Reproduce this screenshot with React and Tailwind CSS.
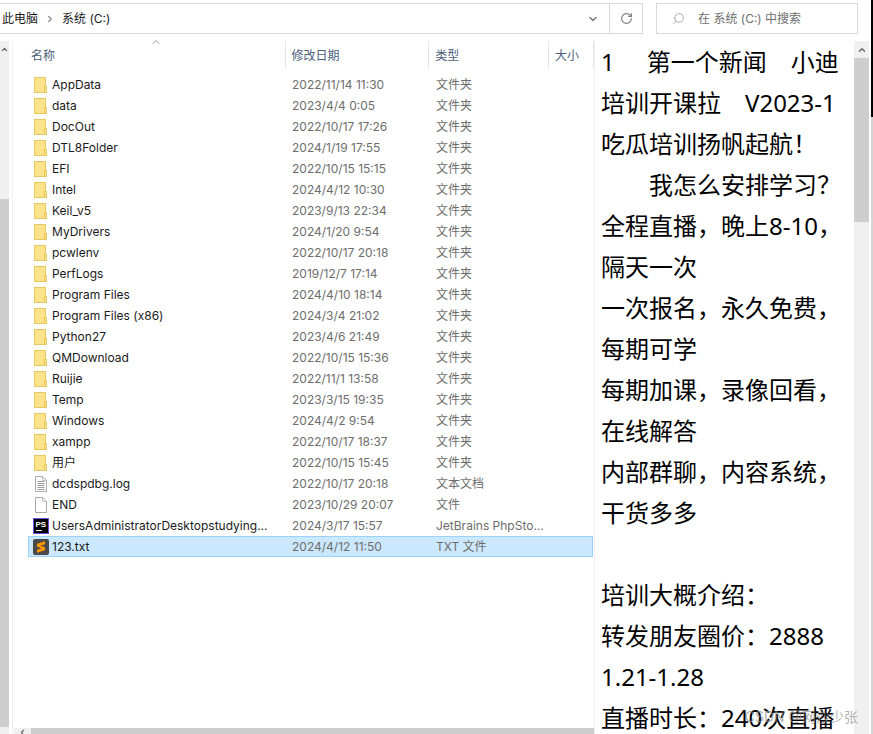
import { ChevronUp, ChevronDown, ChevronLeft, ChevronRight, RotateCw, Search } from 'lucide-react';

const files = [
  ['AppData', '2022/11/14 11:30', '文件夹'],
  ['data', '2023/4/4 0:05', '文件夹'],
  ['DocOut', '2022/10/17 17:26', '文件夹'],
  ['DTL8Folder', '2024/1/19 17:55', '文件夹'],
  ['EFI', '2022/10/15 15:15', '文件夹'],
  ['Intel', '2024/4/12 10:30', '文件夹'],
  ['Keil_v5', '2023/9/13 22:34', '文件夹'],
  ['MyDrivers', '2024/1/20 9:54', '文件夹'],
  ['pcwlenv', '2022/10/17 20:18', '文件夹'],
  ['PerfLogs', '2019/12/7 17:14', '文件夹'],
  ['Program Files', '2024/4/10 18:14', '文件夹'],
  ['Program Files (x86)', '2024/3/4 21:02', '文件夹'],
  ['Python27', '2023/4/6 21:49', '文件夹'],
  ['QMDownload', '2022/10/15 15:36', '文件夹'],
  ['Ruijie', '2022/11/1 13:58', '文件夹'],
  ['Temp', '2023/3/15 19:35', '文件夹'],
  ['Windows', '2024/4/2 9:54', '文件夹'],
  ['xampp', '2022/10/17 18:37', '文件夹'],
  ['用户', '2022/10/15 15:45', '文件夹'],
  ['dcdspdbg.log', '2022/10/17 20:18', '文本文档', 'log'],
  ['END', '2023/10/29 20:07', '文件', 'blank'],
  ['UsersAdministratorDesktopstudying...', '2024/3/17 15:57', 'JetBrains PhpSto...', 'ps'],
  ['123.txt', '2024/4/12 11:50', 'TXT 文件', 'sublime', true],
];

const lines = [
  '1\u3000\u2009\u2009第一个新闻\u3000小迪',
  '培训开课拉\u3000V2023-1',
  '吃瓜培训扬帆起航！',
  '\u3000\u3000我怎么安排学习？',
  '全程直播，晚上8-10，',
  '隔天一次',
  '一次报名，永久免费，',
  '每期可学',
  '每期加课，录像回看，',
  '在线解答',
  '内部群聊，内容系统，',
  '干货多多',
  '\u00a0',
  '培训大概介绍：',
  '转发朋友圈价：2888',
  '1.21-1.28',
  '直播时长：240次直播',
];

const FileIcon = ({ kind }) => {
  if (kind === 'log' || kind === 'blank') {
    return (
      <svg width="14" height="16" viewBox="0 0 14 16" fill="none">
        <path d="M1.5.5h7l4 4v11h-11z" fill="#fff" stroke="#a9a9a9" />
        <path d="M8.5.5v4h4" stroke="#c4c4c4" />
        {kind === 'log' && (
          <path d="M3.5 5.5h7M3.5 7.5h7M3.5 9.5h7M3.5 11.5h7M3.5 13.5h7" stroke="#9a9a9a" />
        )}
      </svg>
    );
  }
  if (kind === 'ps') {
    return (
      <svg width="16" height="16" viewBox="0 0 16 16">
        <rect x="0.5" y="0.5" width="15" height="15" fill="#000" stroke="#6a4fe0" />
        <rect x="3" y="12" width="6" height="1" fill="#fff" />
        <text x="2.5" y="9" fontSize="8" fontWeight="700" fill="#fff" fontFamily="'Liberation Sans', sans-serif">PS</text>
      </svg>
    );
  }
  if (kind === 'sublime') {
    return (
      <svg width="16" height="16" viewBox="0 0 16 16">
        <rect width="16" height="16" rx="2" fill="#4a4a4a" />
        <path d="M4 6 12 3.5v3L7.5 8 12 9.5v3L4 15v-3l4.5-1.5L4 9z" fill="#ff9800" transform="translate(0 -1.2)" />
      </svg>
    );
  }
  return (
    <svg width="14" height="16" viewBox="0 0 14 16">
      <rect x="0.5" y="0.5" width="11" height="15" fill="#ffe38a" stroke="#e8c860" />
      <rect x="10.5" y="9.5" width="2" height="6" fill="#ffe38a" stroke="#e8c860" />
    </svg>
  );
};

const HeaderCell = ({ className, children }) => (
  <div className={`flex h-[27px] items-center border-r border-[#e5e5e5] pl-[6px] pt-[2px] text-[#4c607a] ${className}`}>
    {children}
  </div>
);

const Row = ({ file }) => {
  const [name, date, type, kind, selected] = file;
  return (
    <div className={`flex h-[21px] items-center border ${selected ? 'border-[#99d1ff] bg-[#cce8ff]' : 'border-transparent'}`}>
      <div className="flex w-[21px] shrink-0 justify-center pl-[2px]">
        <FileIcon kind={kind} />
      </div>
      <div className="ml-[2px] w-[240px] shrink-0 whitespace-nowrap text-[#1a1a1a]">{name}</div>
      <div className="w-[144px] shrink-0 text-[#6d6d6d]">{date}</div>
      <div className="whitespace-nowrap text-[#6d6d6d]">{type}</div>
    </div>
  );
};

export default function App() {
  return (
    <div
      className="relative flex h-[734px] w-[873px] flex-col overflow-hidden bg-white text-[12px]"
      style={{ fontFamily: "Inter, 'Noto Sans CJK SC', sans-serif" }}
    >
      {/* address bar */}
      <div className="flex h-[41px] shrink-0 pt-[3px]">
        <div className="flex h-[31px] w-[610px] items-center border-y border-r border-[#d9d9d9] text-[#1a1a1a]">
          <span className="ml-[2px]">此电脑</span>
          <ChevronRight size={10} strokeWidth={3} className="mx-[7px] text-[#8a8a8a]" />
          <span>系统 (C:)</span>
          <ChevronDown size={12} strokeWidth={3} className="ml-auto mr-[10px] text-[#7a7a7a]" />
        </div>
        <div className="flex h-[31px] w-[33px] items-center justify-center border-y border-r border-[#d9d9d9]">
          <RotateCw size={13} strokeWidth={2} className="text-[#7a7a7a]" />
        </div>
        <div className="ml-[13px] flex h-[31px] w-[202px] items-center border border-[#d9d9d9] text-[#6d6d6d]">
          <Search size={13} strokeWidth={1.25} className="ml-[15px] -scale-x-100 text-[#8a8a8a]" />
          <span className="ml-[13px]">在 系统 (C:) 中搜索</span>
        </div>
      </div>

      <div className="flex min-h-0 flex-1">
        {/* left scrollbar */}
        <div className="flex w-[9px] shrink-0 flex-col overflow-hidden bg-[#f0f0f0]">
          <div className="flex h-[17px] shrink-0 items-center justify-end">
            <ChevronUp size={9} strokeWidth={3} className="text-[#606060]" />
          </div>
          <div className="mt-[141px] flex-1 bg-[#cdcdcd]" />
          <div className="h-[7px] shrink-0" />
        </div>

        {/* file list */}
        <div className="ml-[3px] flex w-[582px] shrink-0 flex-col border-l border-[#f0f0f0]">
          <div className="relative flex pl-[15px] text-[12px]">
            <ChevronUp size={12} strokeWidth={1.5} className="absolute left-[137px] top-[-5px] text-[#7a7a7a]" />
            <HeaderCell className="w-[258px] !pl-[3px]">名称</HeaderCell>
            <HeaderCell className="w-[144px]">修改日期</HeaderCell>
            <HeaderCell className="w-[120px]">类型</HeaderCell>
            <HeaderCell className="w-[45px]">大小</HeaderCell>
          </div>
          <div className="ml-[15px] mr-[1px] mt-[6px] flex min-h-0 flex-1 flex-col">
            {files.map((file) => (
              <Row key={file[0]} file={file} />
            ))}
          </div>
          {/* horizontal scrollbar */}
          <div className="ml-[1px] flex h-[6px] shrink-0 bg-[#f0f0f0]">
            <div className="flex w-[17px] shrink-0 justify-center">
              <ChevronLeft size={9} strokeWidth={3} className="text-[#606060]" />
            </div>
            <div className="flex-1 bg-[#cdcdcd]" />
          </div>
        </div>

        {/* preview */}
        <div
          className="w-[260px] shrink-0 overflow-hidden border-l border-[#f0f0f0] pl-[6px] text-[24px] leading-[41px] text-black"
          style={{ fontFamily: "'Noto Sans', 'Noto Sans CJK SC', sans-serif" }}
        >
          {lines.map((line, i) => (
            <div key={i} className="whitespace-pre">{line}</div>
          ))}
        </div>

        {/* right scrollbar */}
        <div className="flex w-[15px] shrink-0 flex-col bg-[#f0f0f0]">
          <div className="flex h-[17px] shrink-0 items-center justify-center">
            <ChevronUp size={10} strokeWidth={3} className="text-[#606060]" />
          </div>
          <div className="h-[164px] bg-[#cdcdcd]" />
        </div>
        <div className="ml-[2px] w-[2px] shrink-0 bg-[#d4d4d4]" />
      </div>

      {/* window behind, at the right edge */}
      <div className="absolute right-0 top-0 h-[117px] w-[2px] bg-black" />
      <div className="pointer-events-none absolute right-[15px] top-[706px] text-[14px] text-[#8f8f8f]/70">CSDN @网沙少张</div>
    </div>
  );
}
